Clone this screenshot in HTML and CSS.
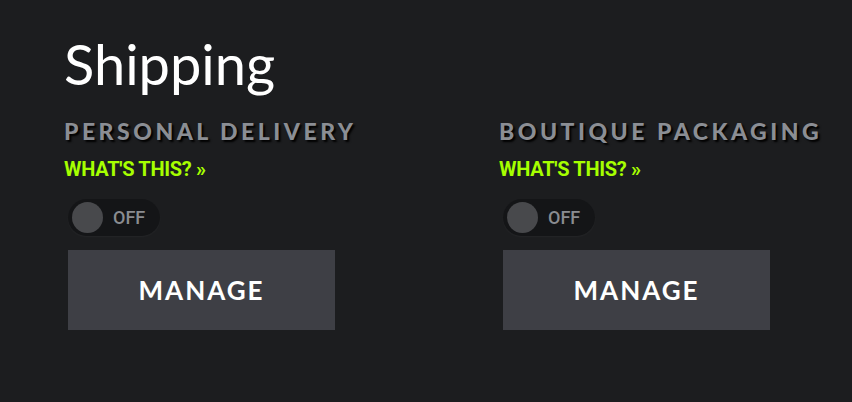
FILE: index.html
```html
<!DOCTYPE html>
<html lang="en">
<head>
    <meta charset="UTF-8">
    <meta name="viewport" content="width=device-width, initial-scale=1.0">
    <title>Shipping</title>

    <link rel="stylesheet" href="styles.css">
</head>

<body>

    <main class="container">

        <h1 class="title">Shipping</h1>

        <div class="options">
            <section class="option">
                <p class="option-name">PERSONAL DELIVERY</p>
                <a class="whats-this" href="#">WHAT'S THIS? &raquo;</a>

                <div class="toggle">
                    <span class="knob"></span>
                    <span class="toggle-label">OFF</span>
                </div>

                <button class="manage">MANAGE</button>
            </section>

            <section class="option">
                <p class="option-name">BOUTIQUE PACKAGING</p>
                <a class="whats-this" href="#">WHAT'S THIS? &raquo;</a>

                <div class="toggle">
                    <span class="knob"></span>
                    <span class="toggle-label">OFF</span>
                </div>

                <button class="manage">MANAGE</button>
            </section>
        </div>
    </main>

</body>
</html>
```

FILE: styles.css
```css
*{
    padding: 0;
    margin: 0;
    box-sizing: border-box;
}

body{
    background-color: #1c1d1f;
    font-family: Lato, "Open Sans", sans-serif;
    color: white;
}

.container{
    padding: 28px 0 0 64px;
}

.title{
    font-size: 56px;
    font-weight: 400;
    line-height: 72px;
}

.options{
    display: grid;
    grid-template-columns: 435px 1fr;
    margin-top: 16px;
}

.option{
    display: flex;
    flex-direction: column;
    align-items: flex-start;
}

.option-name{
    font-size: 23px;
    font-weight: 900;
    letter-spacing: 3.5px;
    line-height: 30px;
    color: #8b8e94;
    text-shadow: 2px 2px 2px #000;
}

.whats-this{
    margin-top: 12px;
    font-family: Roboto, sans-serif;
    font-size: 20px;
    font-weight: 700;
    letter-spacing: -0.3px;
    line-height: 22px;
    color: #a6ff00;
    text-decoration: none;
}

.toggle{
    display: flex;
    align-items: center;
    gap: 10px;
    width: 92px;
    height: 37px;
    margin: 19px 0 0 4px;
    padding: 0 4px;
    border-radius: 19px;
    background-color: #141517;
    box-shadow: 0 1px 2px rgba(255, 255, 255, 0.04);
}

.knob{
    width: 31px;
    height: 31px;
    border-radius: 50%;
    background-color: #48494c;
}

.toggle-label{
    font-family: Roboto, sans-serif;
    font-size: 18px;
    font-weight: 500;
    color: #8a8c91;
}

.manage{
    width: 267px;
    height: 80px;
    margin: 14px 0 0 4px;
    border: none;
    background-color: #3e3f45;
    color: white;
    font-family: Lato, sans-serif;
    font-size: 26px;
    font-weight: 700;
    letter-spacing: 2px;
    cursor: pointer;
}
```
